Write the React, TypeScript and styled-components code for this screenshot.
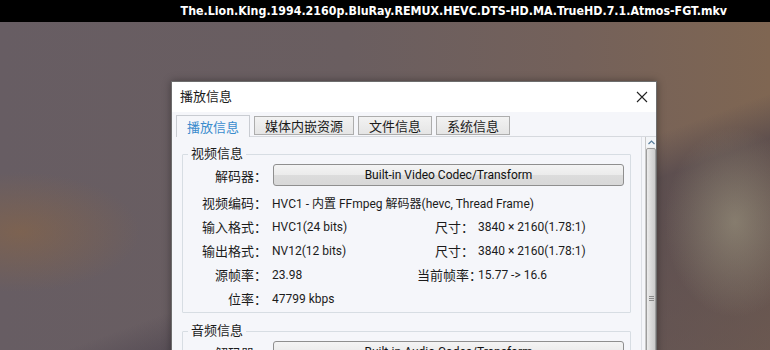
import styled, { createGlobalStyle } from "styled-components";

const GlobalStyle = createGlobalStyle`
  html, body {
    margin: 0;
    padding: 0;
    width: 770px;
    height: 350px;
    overflow: hidden;
    background: #000;
  }
  * { box-sizing: border-box; }
`;

const uiFont = `Roboto, "Noto Sans CJK SC", sans-serif`;

const Screen = styled.div`
  width: 770px;
  height: 350px;
  display: flex;
  flex-direction: column;
  overflow: hidden;
`;

const FileBar = styled.div`
  height: 22px;
  flex-shrink: 0;
  background: #000;
  display: flex;
  justify-content: flex-end;
  align-items: center;
  padding-right: 43px;
  color: #fff;
  font-family: "DejaVu Sans Condensed", "DejaVu Sans", sans-serif;
  font-weight: bold;
  font-size: 12.3px;
`;

const Stage = styled.div`
  flex: 1;
  padding: 59px 0 0 171px;
  background:
    radial-gradient(ellipse 70px 95px at 735px 200px, rgba(170, 166, 140, 0.5), transparent 100%),
    radial-gradient(ellipse 120px 60px at 20px 210px, rgba(150, 105, 60, 0.45), transparent 100%),
    linear-gradient(160deg, transparent 55%, rgba(70, 62, 74, 0.55) 62%, rgba(80, 70, 80, 0.4) 100%),
    linear-gradient(90deg, #675d63 0%, #6a5e60 45%, #74615a 75%, #7f6652 100%);
`;

const Dialog = styled.div`
  width: 486px;
  height: 300px;
  display: flex;
  flex-direction: column;
  background: #f5f6fa;
  border: 1px solid #6d6d6d;
  box-shadow: 0 0 8px rgba(0, 0, 0, 0.35);
  font-family: ${uiFont};
  font-size: 13px;
  color: #1b1b1b;
`;

const TitleBar = styled.div`
  height: 30px;
  flex-shrink: 0;
  background: #fff;
  display: flex;
  align-items: center;
  justify-content: space-between;
  padding: 0 6px 3px 8px;
`;

const CloseButton = styled.div`
  width: 16px;
  height: 16px;
  margin-top: 2px;
  display: flex;
  align-items: center;
  justify-content: center;
`;

const Body = styled.div`
  flex: 1;
  display: flex;
  flex-direction: column;
  padding: 3px 0 0 4px;
`;

const TabRow = styled.div`
  display: flex;
  align-items: flex-end;
  gap: 4px;
  height: 21px;
  position: relative;
  z-index: 1;
`;

const Tab = styled.div<{ $active?: boolean }>`
  height: ${(p) => (p.$active ? "22px" : "19px")};
  margin-bottom: ${(p) => (p.$active ? "-1px" : "1px")};
  padding: 0 10px;
  display: flex;
  align-items: center;
  border: 1px solid ${(p) => (p.$active ? "#c9ccd2" : "#adadad")};
  border-bottom: ${(p) => (p.$active ? "none" : "1px solid #adadad")};
  background: ${(p) => (p.$active ? "#f5f6fa" : "linear-gradient(#f2f2f2, #e5e5e5)")};
  color: ${(p) => (p.$active ? "#3a8ccd" : "#1b1b1b")};
  padding-bottom: ${(p) => (p.$active ? "1px" : "0")};
`;

const Panel = styled.div`
  flex: 1;
  display: flex;
  border-top: 1px solid #d6d9de;
  min-height: 0;
`;

const Content = styled.div`
  flex: 1;
  padding: 9px 10px 0 6px;
  border-right: 1px solid #dde0e6;
  display: flex;
  flex-direction: column;
`;

const Group = styled.fieldset`
  margin: 0;
  padding: 0 0 2px 0;
  border: 1px solid #d7dde3;
  border-radius: 1px;
  & + & {
    margin-top: 10px;
  }
`;

const Legend = styled.legend`
  margin-left: 5px;
  padding: 0 3px;
  line-height: 16px;
  font-size: 13px;
`;

const Grid = styled.div`
  display: grid;
  grid-template-columns: 84px 150px 57px 1fr;
  grid-auto-rows: 24px;
  align-items: center;
`;

const Label = styled.div`
  text-align: right;
  white-space: nowrap;
  font-size: 13px;
`;

const Value = styled.div<{ $wide?: boolean }>`
  white-space: nowrap;
  padding: 1px 0 0 5px;
  font-size: 12px;
  grid-column: ${(p) => (p.$wide ? "2 / 5" : "auto")};
`;

const RightValue = styled.div`
  white-space: nowrap;
  padding: 1px 0 0 4px;
  font-size: 12px;
`;

const CodecRow = styled.div`
  display: grid;
  grid-template-columns: 84px 1fr;
  align-items: center;
  height: 22px;
  margin: 2px 0 4px;
`;

const CodecButton = styled.div`
  margin-left: 6px;
  margin-right: 6px;
  height: 22px;
  border: 1px solid #8f8f8f;
  border-radius: 3px;
  background: linear-gradient(#f4f4f4 0%, #ebebeb 50%, #dcdcdc 52%, #d8d8d8 100%);
  display: flex;
  align-items: center;
  justify-content: center;
  font-size: 12px;
  color: #111;
`;

const ScrollTrack = styled.div`
  width: 11px;
  margin-left: 3px;
  display: flex;
  flex-direction: column;
  background: #f0f0f0;
  border-left: 1px solid #c9c9c9;
`;

const ScrollArrow = styled.div`
  height: 10px;
  display: flex;
  align-items: center;
  justify-content: center;
  background: #f3f5f8;
`;

const ScrollThumb = styled.div`
  flex: 1;
  margin-top: 1px;
  border: 1px solid #9d9d9d;
  border-radius: 2px;
  background: linear-gradient(90deg, #ececec, #d9d9d9 50%, #cbcbcb);
  display: flex;
  align-items: flex-start;
  justify-content: center;
  padding-top: 147px;
`;

const Grip = styled.div`
  width: 5px;
  height: 6px;
  background: repeating-linear-gradient(#8a8a8a 0 1px, transparent 1px 2px);
`;

export default function App() {
  return (
    <>
      <GlobalStyle />
      <Screen>
        <FileBar>The.Lion.King.1994.2160p.BluRay.REMUX.HEVC.DTS-HD.MA.TrueHD.7.1.Atmos-FGT.mkv</FileBar>
        <Stage>
          <Dialog>
            <TitleBar>
              <span>播放信息</span>
              <CloseButton>
                <svg width="12" height="12" viewBox="0 0 12 12">
                  <path d="M1 1 L11 11 M11 1 L1 11" stroke="#222" strokeWidth="1.1" />
                </svg>
              </CloseButton>
            </TitleBar>
            <Body>
              <TabRow>
                <Tab $active>播放信息</Tab>
                <Tab>媒体内嵌资源</Tab>
                <Tab>文件信息</Tab>
                <Tab>系统信息</Tab>
              </TabRow>
              <Panel>
                <Content>
                  <Group>
                    <Legend>视频信息</Legend>
                    <CodecRow>
                      <Label>解码器：</Label>
                      <CodecButton>Built-in Video Codec/Transform</CodecButton>
                    </CodecRow>
                    <Grid>
                      <Label>视频编码：</Label>
                      <Value $wide>HVC1 - 内置 FFmpeg 解码器(hevc, Thread Frame)</Value>
                      <Label>输入格式：</Label>
                      <Value>HVC1(24 bits)</Value>
                      <Label>尺寸：</Label>
                      <RightValue>3840 × 2160(1.78:1)</RightValue>
                      <Label>输出格式：</Label>
                      <Value>NV12(12 bits)</Value>
                      <Label>尺寸：</Label>
                      <RightValue>3840 × 2160(1.78:1)</RightValue>
                      <Label>源帧率：</Label>
                      <Value>23.98</Value>
                      <Label>当前帧率：</Label>
                      <RightValue>15.77 -&gt; 16.6</RightValue>
                      <Label>位率：</Label>
                      <Value>47799 kbps</Value>
                    </Grid>
                  </Group>
                  <Group>
                    <Legend>音频信息</Legend>
                    <CodecRow>
                      <Label>解码器：</Label>
                      <CodecButton>Built-in Audio Codec/Transform</CodecButton>
                    </CodecRow>
                  </Group>
                </Content>
                <ScrollTrack>
                  <ScrollArrow>
                    <svg width="7" height="5" viewBox="0 0 7 5">
                      <path d="M0.5 4 L3.5 1 L6.5 4" stroke="#5a7f9c" strokeWidth="1.2" fill="none" />
                    </svg>
                  </ScrollArrow>
                  <ScrollThumb>
                    <Grip />
                  </ScrollThumb>
                </ScrollTrack>
              </Panel>
            </Body>
          </Dialog>
        </Stage>
      </Screen>
    </>
  );
}
